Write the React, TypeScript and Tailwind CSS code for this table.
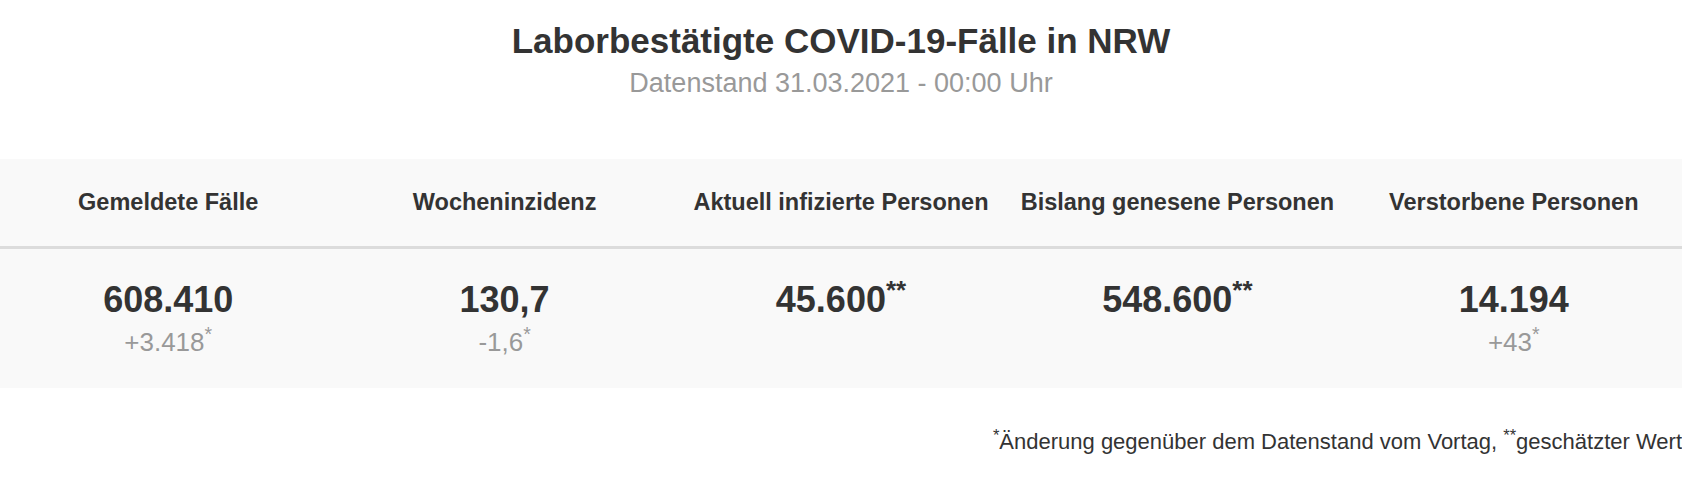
import React from 'react';

interface Stat {
  label: string;
  value: string;
  valueMark?: string;
  delta?: string;
}

const stats: Stat[] = [
  { label: 'Gemeldete Fälle', value: '608.410', delta: '+3.418' },
  { label: 'Wocheninzidenz', value: '130,7', delta: '-1,6' },
  { label: 'Aktuell infizierte Personen', value: '45.600', valueMark: '**' },
  { label: 'Bislang genesene Personen', value: '548.600', valueMark: '**' },
  { label: 'Verstorbene Personen', value: '14.194', delta: '+43' },
];

const App: React.FC = () => {
  return (
    <div className="w-full min-h-[482px] bg-white text-[#333] [font-family:'Liberation_Sans',Arial,sans-serif] overflow-hidden">
      <div className="pt-[21px] text-center">
        <h1 className="text-[35px] leading-[40px] font-bold text-[#333]">
          Laborbestätigte COVID-19-Fälle in NRW
        </h1>
        <p className="mt-[7px] text-[27px] leading-[30px] text-[#999]">
          Datenstand 31.03.2021 - 00:00 Uhr
        </p>
      </div>

      <div className="mt-[61px] bg-[#f9f9f9]">
        <div className="grid grid-cols-5 h-[90px] border-b-[3px] border-[#dcdcdc]">
          {stats.map((s) => (
            <div key={s.label} className="flex items-center justify-center text-[23.5px] font-bold text-[#333] whitespace-nowrap">
              {s.label}
            </div>
          ))}
        </div>
        <div className="grid grid-cols-5 h-[139px] pt-[31px]">
          {stats.map((s) => (
            <div key={s.label} className="flex flex-col items-center">
              <div className="text-[36px] leading-[40px] font-bold text-[#333]">
                {s.value}
                {s.valueMark && <sup className="text-[26px]">{s.valueMark}</sup>}
              </div>
              {s.delta && (
                <div className="mt-[7px] text-[26px] leading-[30px] text-[#999]">
                  {s.delta}
                  <sup>*</sup>
                </div>
              )}
            </div>
          ))}
        </div>
      </div>

      <div className="mt-[41px] flex justify-end">
        <p className="text-[22px] leading-[26px] text-[#333] whitespace-nowrap">
          <sup>*</sup>Änderung gegenüber dem Datenstand vom Vortag, <sup>**</sup>geschätzter Wert
        </p>
      </div>
    </div>
  );
};

export default App;
